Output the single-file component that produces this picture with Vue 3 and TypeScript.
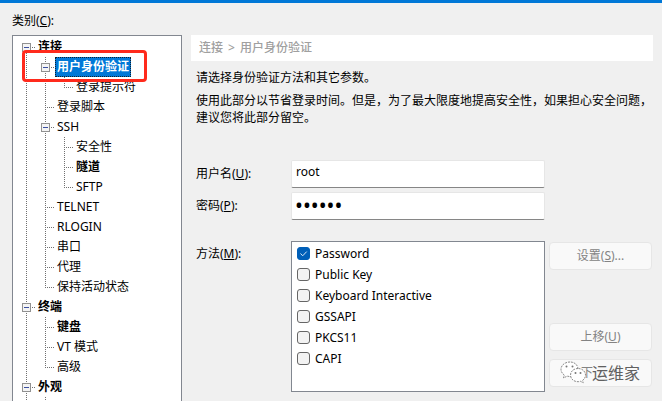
<script setup lang="ts">
import { ref } from 'vue'

type Guide = 'line' | 'tee' | 'end' | 'first' | 'open'

interface TreeRow {
  label: string
  guides: Guide[]
  bold?: boolean
  selected?: boolean
}

interface Method {
  name: string
  checked: boolean
}

const rows: TreeRow[] = [
  { label: '连接', guides: ['first'], bold: true },
  { label: '用户身份验证', guides: ['line', 'open'], bold: true, selected: true },
  { label: '登录提示符', guides: ['line', 'line', 'end'] },
  { label: '登录脚本', guides: ['line', 'tee'] },
  { label: 'SSH', guides: ['line', 'open'] },
  { label: '安全性', guides: ['line', 'line', 'tee'] },
  { label: '隧道', guides: ['line', 'line', 'tee'], bold: true },
  { label: 'SFTP', guides: ['line', 'line', 'end'] },
  { label: 'TELNET', guides: ['line', 'tee'] },
  { label: 'RLOGIN', guides: ['line', 'tee'] },
  { label: '串口', guides: ['line', 'tee'] },
  { label: '代理', guides: ['line', 'tee'] },
  { label: '保持活动状态', guides: ['line', 'end'] },
  { label: '终端', guides: ['open'], bold: true },
  { label: '键盘', guides: ['line', 'tee'], bold: true },
  { label: 'VT 模式', guides: ['line', 'tee'] },
  { label: '高级', guides: ['line', 'end'] },
  { label: '外观', guides: ['open'], bold: true },
  { label: '', guides: ['line', 'line'] },
]

const guidePaths: Record<Guide, string> = {
  line: 'M9.5 0V20',
  tee: 'M9.5 0V20M11 10.5H19',
  end: 'M9.5 0V10M9 10.5H19',
  first: 'M9.5 16V20M15 10.5H19',
  open: 'M9.5 0V5M9.5 16V20M15 10.5H19',
}

const methods = ref<Method[]>([
  { name: 'Password', checked: true },
  { name: 'Public Key', checked: false },
  { name: 'Keyboard Interactive', checked: false },
  { name: 'GSSAPI', checked: false },
  { name: 'PKCS11', checked: false },
  { name: 'CAPI', checked: false },
])

const username = ref('root')
const password = ref('secret')
</script>

<template>
  <div class="dialog">
    <aside class="sidebar">
      <p id="category" class="caption">类别(<u>C</u>):</p>
      <div class="tree-box">
        <ul class="tree" role="tree" aria-labelledby="category">
          <li
            v-for="(row, i) in rows"
            :key="i"
            class="row"
            role="treeitem"
            :aria-selected="row.selected ? 'true' : 'false'"
          >
            <svg v-for="(g, j) in row.guides" :key="j" class="guide" viewBox="0 0 19 20">
              <path :d="guidePaths[g]" class="dots" />
              <template v-if="g === 'open' || g === 'first'">
                <rect x="5.5" y="6.5" width="8" height="8" rx="1" class="knob" />
                <path d="M7 10.5H12" class="minus" />
              </template>
            </svg>
            <span v-if="row.label" class="label" :class="{ bold: row.bold, selected: row.selected }">{{ row.label }}</span>
          </li>
        </ul>
        <div class="highlight"></div>
      </div>
    </aside>

    <main class="content">
      <h1 class="crumb"><span>连接</span><span>&gt;</span><span>用户身份验证</span></h1>
      <div class="body">
        <p class="intro">请选择身份验证方法和其它参数。</p>
        <p class="note">使用此部分以节省登录时间。但是，为了最大限度地提高安全性，如果担心安全问题，建议您将此部分留空。</p>

        <div class="form">
          <label for="user" class="name">用户名(<u>U</u>):</label>
          <input id="user" v-model="username" class="field" type="text" />
          <label for="pass" class="name">密码(<u>P</u>):</label>
          <input id="pass" v-model="password" class="field secret" type="password" />
        </div>

        <div class="form methods">
          <span id="method" class="method-label">方法(<u>M</u>):</span>
          <div class="list" role="group" aria-labelledby="method">
            <label v-for="m in methods" :key="m.name" class="option">
              <input v-model="m.checked" type="checkbox" class="tick" />
              <svg class="check" viewBox="0 0 13 13"><path d="M3.5 6.5L5.7 8.8L9.7 4.6" /></svg>
              <span>{{ m.name }}</span>
            </label>
          </div>
          <div class="actions">
            <button type="button" class="btn" disabled>设置(<u>S</u>)...</button>
            <button type="button" class="btn up" disabled>上移(<u>U</u>)</button>
            <div class="last">
              <button type="button" class="btn down" disabled>下</button>
              <div class="mark">
                <svg class="chat" viewBox="0 0 26 24">
                  <path d="M10 1C5 1 1 4.200 1 8.300c0 2.400 1.300 4.400 3.300 5.700L3.500 17l3.600-1.900c1 .3 2 .4 3.100.4C15 15.500 18 12.300 18 8.300S15 1 10 1z" />
                  <path d="M18 7.500c-4.300 0-7.500 2.900-7.500 6.600s3.200 6.600 7.500 6.600c.9 0 1.800-.1 2.600-.4l2.600 1.500-.6-2.500c1.900-1.200 2.900-3.100 2.900-5.200 0-3.700-3.200-6.600-7.500-6.600z" />
                  <g class="eyes">
                    <circle cx="6.500" cy="5.500" r="1" /><circle cx="12.500" cy="5.500" r="1" />
                    <circle cx="15.500" cy="12" r="1" /><circle cx="20.500" cy="12" r="1" />
                  </g>
                </svg>
                <span>运维家</span>
              </div>
            </div>
          </div>
        </div>
      </div>
    </main>
  </div>
</template>

<style>
body {
  margin: 0;
  background: #f0f0f0;
}
</style>

<style scoped>
* {
  box-sizing: border-box;
}

.dialog {
  display: grid;
  grid-template-columns: 170px minmax(0, 1fr);
  column-gap: 9px;
  height: 100vh;
  overflow: hidden;
  padding: 0 9px 0 12px;
  border-top: 3px solid #0078d7;
  background: #f0f0f0;
  color: #000;
  font-family: 'Noto Sans', 'Noto Sans CJK SC', sans-serif;
  font-size: 12px;
  line-height: 16px;
}

p,
h1,
ul {
  margin: 0;
  padding: 0;
}

u {
  text-underline-offset: 1px;
}

.sidebar {
  display: flex;
  flex-direction: column;
  min-height: 0;
}

.caption {
  padding: 10px 0 6px;
}

.tree-box {
  position: relative;
  flex: 1;
  min-height: 0;
  padding: 1px 0 0 4px;
  overflow: hidden;
  border: 1px solid #828790;
  border-bottom: 0;
  background: #fff;
}

.tree {
  list-style: none;
}

.row {
  display: flex;
  height: 20px;
}

.guide {
  flex: none;
  width: 19px;
  height: 20px;
  shape-rendering: crispEdges;
}

.dots {
  fill: none;
  stroke: #707070;
  stroke-dasharray: 1 1;
}

.knob {
  fill: #f4f4f4;
  stroke: #919191;
}

.minus {
  stroke: #3c50a0;
}

.label {
  padding: 0 2px;
  line-height: 20px;
  white-space: nowrap;
}

.bold {
  font-weight: 700;
}

.selected {
  outline: 1px dotted #10202c;
  outline-offset: -1px;
  background: #0078d7;
  color: #fff;
}

.highlight {
  position: absolute;
  top: 14px;
  left: 9px;
  width: 125px;
  height: 32px;
  border: 3px solid #ff2a1c;
  border-radius: 4px;
}

.content {
  padding-top: 32px;
}

.crumb {
  display: flex;
  gap: 5px;
  padding: 5px 8px;
  background: #fff;
  color: #a0a0a0;
  font-size: 12px;
  font-weight: 500;
}

.body {
  padding-left: 5px;
}

.intro {
  padding: 9px 0 6px;
}

.note {
  line-height: 17px;
}

.form {
  display: grid;
  grid-template-columns: 95px minmax(0, 254px) minmax(0, 103px);
  row-gap: 4px;
  margin-top: 34px;
  align-items: center;
}

.name {
  grid-column: 1;
}

.field {
  grid-column: 2;
  width: 100%;
  height: 28px;
  padding: 0 4px 5px;
  border: 1px solid #e6e6e6;
  border-bottom-color: #868686;
  border-radius: 2px;
  outline: none;
  background: #fff;
  color: #000;
  font: inherit;
}

.secret {
  padding: 0 3px 3px;
  font-size: 21px;
}

.methods {
  margin-top: 21px;
  align-items: stretch;
}

.method-label {
  padding-top: 5px;
}

.list {
  padding: 1px 5px 22px;
  border: 1px solid #828790;
  background: #fff;
}

.option {
  position: relative;
  display: flex;
  align-items: center;
  gap: 5px;
  height: 21px;
}

.tick {
  appearance: none;
  width: 13px;
  height: 13px;
  margin: 0;
  border: 1px solid #666;
  border-radius: 3px;
  background: #f3f3f3;
}

.tick:checked {
  border-color: #005fb8;
  background: #005fb8;
}

.check {
  position: absolute;
  left: 0;
  width: 13px;
  height: 13px;
  fill: none;
  stroke: none;
  pointer-events: none;
}

.tick:checked + .check {
  stroke: #d8e8f6;
}

.actions {
  display: flex;
  flex-direction: column;
  padding: 1px 0 5px 4px;
  margin-right: -4px;
}

.btn {
  display: block;
  width: 100%;
  height: 28px;
  padding: 0;
  border: 1px solid #e6e6e6;
  border-radius: 4px;
  background: #f9f9f9;
  color: #838383;
  font: inherit;
}

.up {
  margin: auto 0 8px;
}

.last {
  position: relative;
}

.down {
  padding-left: 31px;
  text-align: left;
}

.mark {
  position: absolute;
  top: 0;
  left: 11px;
  display: flex;
  align-items: center;
  gap: 6px;
  height: 28px;
  color: #606060;
  font-size: 16px;
  white-space: nowrap;
}

.chat {
  width: 26px;
  height: 24px;
  fill: #fff;
  stroke: #8a8a8a;
  stroke-width: 1;
  stroke-dasharray: 2 1;
}

.eyes {
  fill: #777;
  stroke: none;
}
</style>
